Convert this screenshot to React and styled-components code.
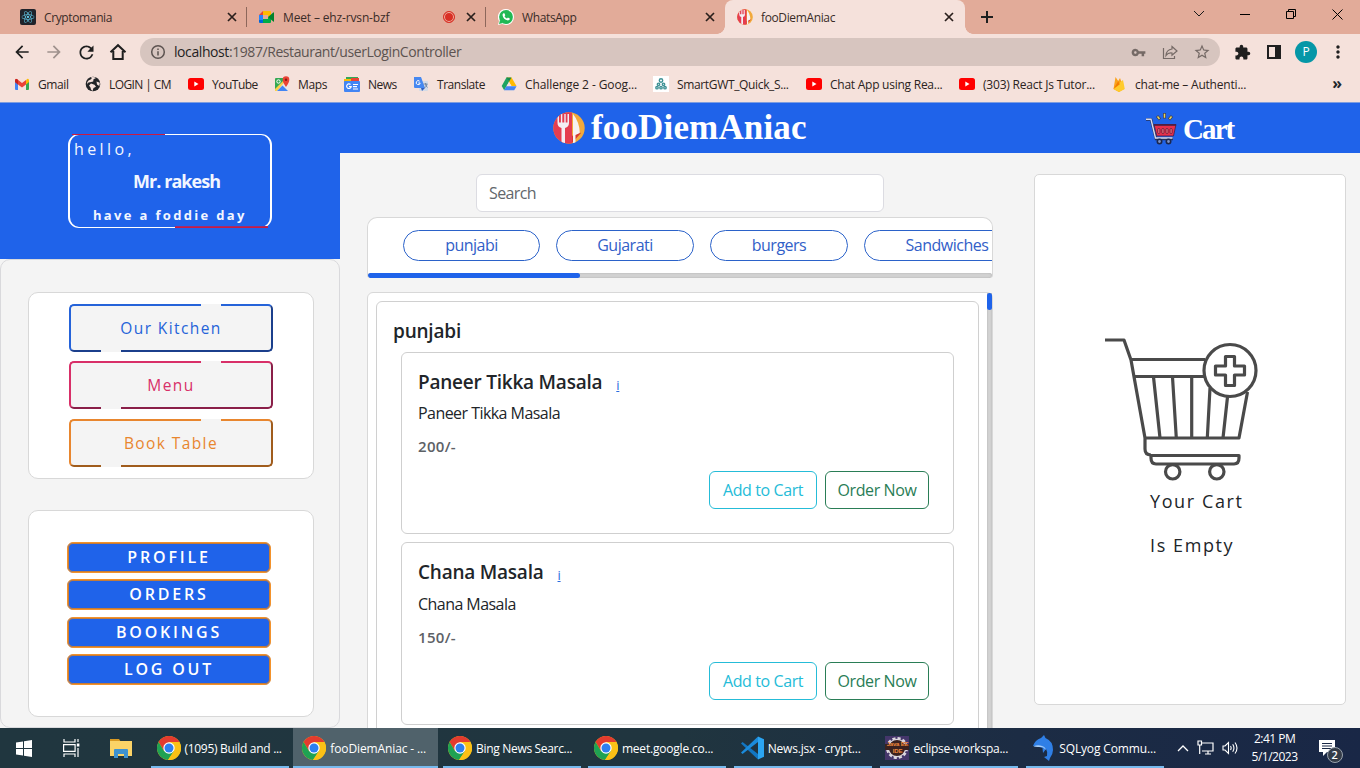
import React from "react";
import styled, { createGlobalStyle, css } from "styled-components";
import { MdArrowBack, MdArrowForward, MdRefresh, MdVpnKey, MdExtension, MdStarBorder, MdMoreVert } from "react-icons/md";
import { FaReact } from "react-icons/fa";

const BLUE = "#1f63ea";

const GlobalStyle = createGlobalStyle`
  * { box-sizing: border-box; }
  body {
    margin: 0;
    overflow: hidden;
    font-family: "Open Sans", "Noto Sans", sans-serif;
    color: #212529;
  }
  svg { display: block; flex: none; }
`;

const Screen = styled.div`
  width: 1360px;
  height: 768px;
  display: flex;
  flex-direction: column;
  overflow: hidden;
  background: #f4f4f4;
`;

/* ---------- browser chrome ---------- */

const TabStrip = styled.div`
  height: 34px;
  flex: none;
  display: flex;
  background: #e2ab99;
  padding-left: 8px;
`;

const Tab = styled.div`
  position: relative;
  width: 239px;
  flex: none;
  display: flex;
  align-items: center;
  padding: 0 10px 0 12px;
  font-size: 12px;
  color: #3a2c28;
  ${(p) =>
    p.$divided &&
    css`
      &::after {
        content: "";
        position: absolute;
        right: 0;
        top: 7px;
        width: 1px;
        height: 20px;
        background: #8d675b;
      }
    `}
  ${(p) =>
    p.$active &&
    css`
      width: 240px;
      padding-right: 11px;
      background: #f5e1db;
      border-radius: 8px 8px 0 0;
      &::before,
      &::after {
        content: "";
        position: absolute;
        bottom: 0;
        width: 8px;
        height: 8px;
      }
      &::before {
        left: -8px;
        background: radial-gradient(circle at 0 0, transparent 7.5px, #f5e1db 8px);
      }
      &::after {
        right: -8px;
        background: radial-gradient(circle at 100% 0, transparent 7.5px, #f5e1db 8px);
      }
    `}
`;

const TabTitle = styled.span`
  flex: 1;
  margin-left: 8px;
  white-space: nowrap;
  letter-spacing: -0.37px;
`;

const MeetingTitle = styled(TabTitle)`
  letter-spacing: -0.15px;
`;

const RecordDot = styled.span`
  width: 12px;
  height: 12px;
  margin-right: 11px;
  border-radius: 50%;
  border: 1px solid #d93025;
  background: #d93025;
  box-shadow: inset 0 0 0 1px #f0b8a8;
`;

const NewTab = styled.div`
  display: flex;
  align-items: center;
  margin-left: 15px;
`;

const WindowControls = styled.div`
  margin-left: auto;
  display: flex;
  height: 28px;
`;

const WindowButton = styled.div`
  width: 46px;
  display: flex;
  align-items: center;
  justify-content: center;
`;

const Toolbar = styled.div`
  height: 36px;
  flex: none;
  display: flex;
  align-items: center;
  background: #f5e1db;
  padding-left: 6px;
  color: #1f1f1f;
`;

const ToolButton = styled.div`
  width: 32px;
  display: flex;
  justify-content: center;
  color: ${(p) => p.$tone || "#1f1f1f"};
`;

const AddressBar = styled.div`
  width: 1080px;
  height: 28px;
  margin: 0 6px;
  display: flex;
  align-items: center;
  padding: 0 2px;
  border-radius: 14px;
  background: #d7c5bf;
`;

const Url = styled.div`
  flex: 1;
  font-size: 14px;
  line-height: 18px;
  letter-spacing: -0.42px;
  color: #5c5350;
  b {
    font-weight: 400;
    color: #1f1f1f;
  }
`;

const Avatar = styled.div`
  width: 22px;
  height: 22px;
  border-radius: 50%;
  background: #0597a7;
  color: #fff;
  font-size: 12px;
  line-height: 22px;
  text-align: center;
`;

const BookmarkBar = styled.div`
  height: 33px;
  flex: none;
  display: flex;
  align-items: center;
  background: #f5e1db;
  border-bottom: 1px solid #7d9de0;
  padding: 0 18px 4px 14px;
`;

const Bookmark = styled.div`
  display: flex;
  align-items: center;
  gap: 8px;
  width: ${(p) => p.$w}px;
  flex: none;
  font-size: 12px;
  letter-spacing: ${(p) => p.$ls}px;
  white-space: nowrap;
  color: #2b2321;
`;

const MoreBookmarks = styled.div`
  margin-left: auto;
  font-size: 16px;
  font-weight: 700;
  line-height: 14px;
  padding-bottom: 3px;
`;

/* ---------- page ---------- */

const Page = styled.div`
  flex: 1;
  min-height: 0;
  display: flex;
  overflow: hidden;
`;

const Sidebar = styled.aside`
  width: 340px;
  flex: none;
  display: flex;
  flex-direction: column;
`;

const Greeting = styled.div`
  height: 156px;
  background: ${BLUE};
  padding: 31px 0 0 68px;
`;

const GreetingBox = styled.div`
  position: relative;
  width: 204px;
  height: 94px;
  border: 0 solid #fff;
  border-width: 1px 2px;
  border-radius: 11px;
  color: #f2f6ff;
  display: flex;
  flex-direction: column;
`;

const TopAccent = styled.span`
  position: absolute;
  top: -1px;
  left: 2px;
  width: 93px;
  height: 1px;
  background: #cc1a40;
`;

const BottomAccent = styled.span`
  position: absolute;
  bottom: -1px;
  right: 2px;
  width: 93px;
  height: 2px;
  background: linear-gradient(#a02c6c 50%, #cc1a40 50%);
`;

const Hello = styled.div`
  margin: 4px 0 0 4px;
  font-size: 16px;
  line-height: 21px;
  letter-spacing: 3.4px;
`;

const GuestName = styled.div`
  margin: 9px 0 0 63px;
  font-size: 18px;
  line-height: 24px;
  font-weight: 700;
  letter-spacing: -0.95px;
`;

const Wish = styled.div`
  margin: 13px 0 0 23px;
  font-size: 13px;
  line-height: 18px;
  font-weight: 700;
  letter-spacing: 2.33px;
  white-space: nowrap;
`;

const SidePanel = styled.div`
  flex: 1;
  display: flex;
  flex-direction: column;
  align-items: flex-start;
  gap: 31px;
  padding: 32px 0 0 27px;
  border: 1px solid #d9d9dc;
  border-radius: 10px;
`;

const SideCard = styled.div`
  width: 286px;
  height: ${(p) => p.$h}px;
  display: flex;
  flex-direction: column;
  padding: ${(p) => p.$pad};
  gap: ${(p) => p.$gap}px;
  background: #fff;
  border: 1px solid #d8d8d8;
  border-radius: 10px;
`;

const NavButton = styled.div`
  position: relative;
  width: 204px;
  height: 48px;
  border: 2px solid;
  border-color: ${(p) => `${p.$tone} ${p.$dark} ${p.$dark} ${p.$tone}`};
  border-radius: 5px;
  background: #f4f4f4;
  color: ${(p) => p.$tone};
  font-size: 15.5px;
  line-height: 45px;
  letter-spacing: 1.4px;
  text-align: center;
  &::before,
  &::after {
    content: "";
    position: absolute;
    width: 20px;
    height: 2px;
    background: #f4f4f4;
  }
  &::before {
    top: -2px;
    left: 130px;
  }
  &::after {
    bottom: -2px;
    left: 30px;
  }
`;

const AccountButton = styled.div`
  width: 204px;
  height: 31px;
  border: 1px solid #f3922b;
  box-shadow: inset 0 0 0 1px #c47b38;
  border-radius: 6px;
  background: ${BLUE};
  color: #fff;
  font-size: 16px;
  font-weight: 600;
  line-height: 29.6px;
  letter-spacing: 2.8px;
  text-align: center;
`;

const Content = styled.div`
  flex: 1;
  display: flex;
  flex-direction: column;
  min-width: 0;
`;

const Header = styled.header`
  height: 50px;
  flex: none;
  display: flex;
  align-items: center;
  background: ${BLUE};
  padding-left: 213px;
  color: #fff;
  font-family: "Liberation Serif", serif;
  font-weight: 700;
`;

const Brand = styled.div`
  display: flex;
  align-items: center;
  gap: 6px;
  width: 592px;
  font-size: 35px;
  line-height: 50px;
  letter-spacing: 0.15px;
`;

const CartLink = styled.div`
  display: flex;
  align-items: center;
  gap: 6px;
  font-size: 29px;
  line-height: 50px;
  letter-spacing: -1.9px;
  padding-top: 2px;
`;

const Columns = styled.div`
  flex: 1;
  min-height: 0;
  display: flex;
  align-items: flex-start;
  padding: 21px 14px 0 27px;
  gap: 41px;
`;

const MenuColumn = styled.main`
  width: 626px;
  flex: none;
  display: flex;
  flex-direction: column;
`;

const SearchBox = styled.div`
  width: 408px;
  height: 38px;
  margin-left: 109px;
  padding-left: 12px;
  border: 1px solid #dcdce2;
  border-radius: 6px;
  background: #fff;
  color: #62676c;
  font-size: 16px;
  line-height: 37px;
  letter-spacing: -0.6px;
`;

const CategoryBox = styled.div`
  height: 61px;
  margin-top: 5px;
  border: 1px solid #d8d8d8;
  border-bottom: 0;
  border-radius: 10px 10px 3px 3px;
  background: #fff;
  overflow: hidden;
  display: flex;
  flex-direction: column;
  justify-content: space-between;
`;

const Pills = styled.div`
  display: flex;
  gap: 16px;
  padding: 12px 0 0 35px;
`;

const Pill = styled.div`
  width: ${(p) => p.$w || 138}px;
  height: 31px;
  flex: none;
  border: 1px solid #2b62c9;
  border-radius: 16px;
  color: #3260c8;
  font-size: 16px;
  line-height: 29px;
  letter-spacing: -0.5px;
  text-align: center;
`;

const ScrollTrack = styled.div`
  height: 5px;
  border-radius: 3px;
  background: #d2d2d2;
  box-shadow: inset 0 0 2px #a8a8a8;
`;

const ScrollThumb = styled.div`
  width: 212px;
  height: 5px;
  border-radius: 3px;
  background: ${BLUE};
`;

const DishList = styled.div`
  height: 460px;
  margin-top: 14px;
  display: flex;
  justify-content: space-between;
  padding-left: 8px;
  border: 1px solid #d8d8d8;
  border-radius: 6px;
  background: #fff;
`;

const DishSection = styled.section`
  width: 603px;
  margin-top: 8px;
  padding: 16px 0 0 24px;
  border: 1px solid #d0d0d0;
  border-radius: 6px;
`;

const SideScroll = styled.div`
  width: 5px;
  background: #d2d2d2;
  box-shadow: inset 0 0 2px #a8a8a8;
  &::before {
    content: "";
    display: block;
    height: 17px;
    border-radius: 3px;
    background: ${BLUE};
  }
`;

const SectionTitle = styled.h5`
  margin: 0 0 8px -8px;
  font-size: 19px;
  font-weight: 600;
  line-height: 26px;
  letter-spacing: -0.2px;
`;

const DishCard = styled.article`
  width: 553px;
  height: ${(p) => p.$h}px;
  margin-bottom: 8px;
  padding: 16px 24px 0 16px;
  border: 1px solid #cfcfcf;
  border-radius: 6px;
`;

const DishName = styled.h5`
  margin: 0;
  display: flex;
  gap: 14px;
  font-size: 19px;
  font-weight: 600;
  line-height: 26px;
  letter-spacing: -0.23px;
  u {
    font-size: 13px;
    font-weight: 400;
    line-height: 32px;
    height: 26px;
    color: #2b6be0;
  }
`;

const DishText = styled.div`
  margin-top: ${(p) => p.$top}px;
  font-size: 16px;
  line-height: 24px;
  letter-spacing: -0.55px;
`;

const Price = styled.div`
  margin-top: 9px;
  font-size: 15px;
  font-weight: 600;
  line-height: 24px;
  letter-spacing: 0.3px;
  color: #5d6166;
`;

const Actions = styled.div`
  display: flex;
  justify-content: flex-end;
  gap: 8px;
  margin-top: 13px;
`;

const ActionButton = styled.div`
  width: ${(p) => p.$w}px;
  height: 38px;
  border: 1px solid ${(p) => p.$tone};
  border-radius: 6px;
  color: ${(p) => p.$tone};
  font-size: 16px;
  line-height: 37px;
  letter-spacing: -0.4px;
  text-align: center;
`;

const CartPanel = styled.div`
  width: 312px;
  height: 531px;
  display: flex;
  flex-direction: column;
  padding: 162px 0 0 70px;
  background: #fff;
  border: 1px solid #d8d8d8;
  border-radius: 5px;
`;

const EmptyText = styled.div`
  margin: ${(p) => p.$top}px 0 0 45px;
  font-size: 18px;
  line-height: 26px;
  letter-spacing: 1.6px;
`;

/* ---------- taskbar ---------- */

const Taskbar = styled.div`
  height: 40px;
  flex: none;
  display: flex;
  background: linear-gradient(90deg, #20363f 0%, #20353f 50%, #1c2c44 75%, #192746 100%);
  color: #fff;
  font-size: 12px;
`;

const TaskIcon = styled.div`
  width: ${(p) => p.$w}px;
  display: flex;
  align-items: center;
  justify-content: center;
`;

const TaskItem = styled.div`
  position: relative;
  width: 145px;
  margin-right: 0.8px;
  display: flex;
  align-items: center;
  gap: 4px;
  padding-left: 9.5px;
  white-space: nowrap;
  letter-spacing: ${(p) => p.$ls}px;
  background: ${(p) => (p.$active ? "#50626b" : "transparent")};
  &::after {
    content: "";
    position: absolute;
    bottom: 0;
    left: ${(p) => (p.$active ? 0 : 4)}px;
    right: ${(p) => (p.$active ? 0 : 3)}px;
    height: 2px;
    background: #76b9ed;
  }
`;

const Tray = styled.div`
  display: flex;
  align-items: center;
  margin-left: 9px;
  gap: 8px;
`;

const Clock = styled.div`
  width: 54px;
  margin-left: 2px;
  text-align: center;
  line-height: 18px;
  letter-spacing: -0.5px;
`;

const Notifications = styled.div`
  position: relative;
  margin-left: 9px;
`;

const Badge = styled.span`
  position: absolute;
  left: 8px;
  top: 7px;
  width: 16px;
  height: 16px;
  border-radius: 50%;
  border: 1px solid #9aa3ad;
  background: #343c48;
  font-size: 11px;
  font-weight: 600;
  line-height: 14px;
  text-align: center;
`;

/* ---------- drawings ---------- */

const Cross = () => (
  <svg width="10" height="10" viewBox="0 0 10 10" stroke="#2a1f1c" strokeWidth="1.7">
    <path d="M1 1l8 8M9 1l-8 8" />
  </svg>
);

const ReactTile = () => (
  <svg width="16" height="16" viewBox="0 0 16 16">
    <rect width="16" height="16" rx="2" fill="#20232a" />
    <g transform="translate(1.5 1.5)" color="#61c9e8">
      <FaReact size={13} />
    </g>
  </svg>
);

const MeetIcon = () => (
  <svg width="16" height="16" viewBox="0 0 16 16">
    <path d="M4 2v4H0z" fill="#ea4335" />
    <path d="M0 6h4v5H0z" fill="#2684fc" />
    <path d="M0 11h4v3H1q-1 0-1-1z" fill="#0066da" />
    <path d="M4 2h7q1 0 1 1v4L9 8V6H4z" fill="#ffba00" />
    <path d="M4 10h5V8l3 1v4q0 1-1 1H4z" fill="#00ac47" />
    <path d="M9 8l5.3-4.6q.7-.4.7.4v8.6q0 .7-.7.2z" fill="#00832d" />
  </svg>
);

const WhatsAppIcon = () => (
  <svg width="16" height="16" viewBox="0 0 16 16">
    <path d="M8 0a8 8 0 0 1 0 16l-4-1-4 1 1-4A8 8 0 0 1 8 0" fill="#fff" />
    <circle cx="8" cy="8" r="6.9" fill="#20b954" />
    <path d="M1 15l1-4 3 3z" fill="#20b954" />
    <path d="M5.4 4.3l1-.1.9 2-.8 1q.9 1.6 2.5 2.4l.9-1 1.9.9q.2 1.700-1.800 2Q5.100 10.500 4.500 6q.1-1.200.9-1.700" fill="#fff" />
  </svg>
);

const CutleryLogo = ({ size }) => (
  <svg width={size} height={size} viewBox="0 0 32 32">
    <defs>
      <clipPath id={`disc${size}`}>
        <circle cx="16" cy="16" r="15.700" />
      </clipPath>
    </defs>
    <g clipPath={`url(#disc${size})`}>
      <rect width="32" height="32" fill="#f2a93b" />
      <path d="M0 0h19v32H0z" fill="#e53d50" />
      <path d="M19 24l6-4 3 1-9 10z" fill="#d9372f" />
      <path d="M4.500 2v9q0 4 4 5v16h3.500V16q4-1 4-5V2h-1.500v8.500h-1.800V2h-1.400v8.500H9.300V2H7.900v8.500H6V2z" fill="#f3eef4" />
      <path d="M20 2q6.500 8 6.800 19L22.500 23v9H20z" fill="#f6f2f2" />
    </g>
  </svg>
);

const GmailIcon = () => (
  <svg width="16" height="16" viewBox="0 0 16 16">
    <path d="M1 5h3v9H2q-1 0-1-1z" fill="#4285f4" />
    <path d="M12 5h3v8q0 1-1 1h-2z" fill="#34a853" />
    <path d="M12 4.500 13 3q2-.8 2 1.500V6l-3 2.500z" fill="#fbbc04" />
    <path d="M1 6V4.500Q1 2 3.200 3.200L8 7l4-3v4.500l-4 3-4-3z" fill="#ea4335" />
    <path d="M1 6V4.500Q1 2.500 3 3l1 1v4.500z" fill="#c5221f" />
  </svg>
);

const GlobeIcon = () => (
  <svg width="16" height="16" viewBox="0 0 16 16">
    <circle cx="8" cy="8" r="7.300" fill="#222427" />
    <path d="M2.200 8.500Q2.500 6 5 6.200L8.200 5.500 8.500 3.200 11 2Q9 .6 6 1.200 7.500 2 6 3.200L3.500 4.500Q1.500 6 2.200 8.500M6 7.500l3.500 1.200 1.500 2-2.500 1.300L7.500 15Q5.500 13.500 5.500 11.500L4 9.500zM11.500 5.500l3.300 1.200-.5 3.300-2.300-1.500z" fill="#f5e1db" />
  </svg>
);

const YouTubeIcon = () => (
  <svg width="16" height="16" viewBox="0 0 16 16">
    <rect y="2" width="16" height="12" rx="2.500" fill="#f00" />
    <path d="M6.300 5.500v5L10.500 8z" fill="#fff" />
  </svg>
);

const MapsIcon = () => (
  <svg width="16" height="16" viewBox="0 0 16 16">
    <rect x="1" y="2" width="13" height="13" rx="1" fill="#34a853" />
    <path d="M1 15 13 3l1 1v11z" fill="#e8e8e8" />
    <path d="M1 13 12 2h2L3 15H1z" fill="#fbd14b" />
    <path d="M3 15l5.500-5.500L14 15z" fill="#4285f4" />
    <circle cx="4.500" cy="5.500" r="1.700" fill="none" stroke="#fff" />
    <path d="M12 11Q8.500 6 8.700 3.500A3.300 3.300 0 0 1 15.300 3.500Q15.500 6 12 11" fill="#ea4335" />
    <circle cx="12" cy="3.700" r="1.200" fill="#8c1a12" />
  </svg>
);

const NewsIcon = () => (
  <svg width="16" height="16" viewBox="0 0 16 16">
    <path d="M2 1h12v4H2z" fill="#34a853" />
    <path d="M0 3h10v4H0z" fill="#fbbc04" />
    <path d="M7 2h8v4H7z" fill="#ea4335" />
    <rect y="5" width="16" height="11" rx="1" fill="#4285f4" />
    <path d="M6.500 8.500a2.300 2.300 0 1 0 .7 2.200H5M9 8.500h5M9 10.700h4M9 13h5" fill="none" stroke="#fff" strokeWidth="1.200" />
  </svg>
);

const TranslateIcon = () => (
  <svg width="16" height="16" viewBox="0 0 16 16">
    <rect x="6" y="5" width="9" height="10" rx="1" fill="#d5dbe6" />
    <path d="M1 1h7l4 11H2q-1 0-1-1z" fill="#4688f1" />
    <path d="M8 12h4l-3 3z" fill="#2f5fc0" />
    <path d="M6.600 5.200a2 2 0 1 0 .6 1.800H5.300" fill="none" stroke="#fff" />
    <path d="M10.500 8h4M12.500 7v1q0 2 2 3.500M14 8q-.5 2.500-2.500 4" fill="none" stroke="#6b7d99" strokeWidth=".8" />
  </svg>
);

const DriveIcon = () => (
  <svg width="16" height="16" viewBox="0 0 16 16">
    <path d="M5.500 1.500h5L15.500 10h-5z" fill="#ffba00" />
    <path d="M.7 10 5.500 1.500h1L8 5.800 3.200 14.300z" fill="#1ea362" />
    <path d="M5.500 1.500h5L8 5.800z" fill="#178a4f" />
    <path d="M8 6l2.300 4H5.700z" fill="#f5e1db" />
    <path d="M5.400 10.200h10.200L13.200 14.300H3z" fill="#4285f4" />
  </svg>
);

const GwtIcon = () => (
  <svg width="16" height="16" viewBox="0 0 16 16">
    <rect width="16" height="16" fill="#fff" />
    <g fill="none" stroke="#3f9296" strokeWidth="1.400">
      <circle cx="8" cy="4.500" r="1.700" />
      <circle cx="5.500" cy="8.300" r="1.200" />
      <circle cx="10.500" cy="8.300" r="1.200" />
      <circle cx="4" cy="11.700" r="1.200" />
      <circle cx="8" cy="11.700" r="1.200" />
      <circle cx="12" cy="11.700" r="1.200" />
    </g>
  </svg>
);

const FirebaseIcon = () => (
  <svg width="16" height="16" viewBox="0 0 16 16">
    <path d="M2.500 13 4.500 1l2.700 4L9 2l4 11-5 3z" fill="#f9a21b" />
    <path d="M2.500 13 11.300 4.300l.8.200L13.800 13 8 16z" fill="#ffcb2c" />
    <path d="M2.500 13 7.200 5.200l1.600 3z" fill="#f57c00" />
  </svg>
);

const InfoIcon = () => (
  <svg width="16" height="16" viewBox="0 0 16 16" fill="none" stroke="#5c5350" strokeWidth="1.500">
    <circle cx="8" cy="8" r="6.300" />
    <path d="M8 7.200V11.500M8 4.500V6" />
  </svg>
);

const HomeIcon = () => (
  <svg width="18" height="18" viewBox="0 0 18 18" fill="none" stroke="#1f1f1f" strokeWidth="2">
    <path d="M1.500 9.300 9 2.200l7.500 7.100M4.300 8v8h9.400V8" />
  </svg>
);

const ShareIcon = () => (
  <svg width="16" height="16" viewBox="0 0 16 16" fill="none" stroke="#756a66" strokeWidth="1.200">
    <path d="M1.500 4v10.500h11V12" />
    <path d="M10 2.500 15 7l-5 4.300V9q-4-.5-6 2.500Q4.300 5.800 10 5z" />
  </svg>
);

const PanelIcon = () => (
  <svg width="14" height="14" viewBox="0 0 14 14">
    <path d="M1 1h12v12H1z" fill="none" stroke="#1f1f1f" strokeWidth="2" />
    <path d="M8 1h5v12H8z" fill="#1f1f1f" />
  </svg>
);

const PartyCart = () => (
  <svg width="32" height="32" viewBox="0 0 32 32">
    <path d="M1 6.500h5L11 26h17" fill="none" stroke="#26335c" strokeWidth="2.600" />
    <path d="M1 6.300h5L10.500 25h17" fill="none" stroke="#d7dcf0" strokeWidth="1.400" />
    <path d="M9 11.500h22L28.500 23H11.800z" fill="#e8304c" stroke="#4a2450" strokeWidth=".9" />
    <path d="M9 12h22" stroke="#4c1f40" strokeWidth="1.600" />
    <g fill="#ee6a78" stroke="#5c1c3a" strokeWidth=".8">
      <rect x="12.700" y="15.500" width="2.200" height="5" rx="1" />
      <rect x="16.800" y="15.500" width="2.200" height="5" rx="1" />
      <rect x="20.900" y="15.500" width="2.200" height="5" rx="1" />
      <rect x="25" y="15.500" width="2.200" height="5" rx="1" />
    </g>
    <g stroke="#40445a" strokeWidth="3">
      <path d="M19.500 0v5.500M12 3l3 3.500M27 3l-3 3.500" />
    </g>
    <g stroke="#ead75a" strokeWidth="1.400">
      <path d="M19.500 .7v4M12.500 3.500l2 2.500M26.500 3.500l-2 2.500" />
    </g>
    <g fill="#7d92c6" stroke="#1b2750" strokeWidth="1.600">
      <circle cx="14.500" cy="28.500" r="2.200" />
      <circle cx="23.500" cy="28.500" r="2.200" />
    </g>
  </svg>
);

const EmptyCart = () => (
  <svg width="156" height="146" viewBox="0 0 156 146" fill="none" stroke="#4a4a4a" strokeWidth="3.200" strokeLinejoin="round">
    <path d="M0 3h19l7 20 14 78v11q0 6 6 6M26 22.500h74M28 39.500h73M40 101h94l8.500-46" />
    <path d="M48.500 40l6.500 61M67.500 40l3.800 61M86.700 40v61M105 51l-2.700 50M122.500 60l-4.500 41" />
    <path d="M46 118.500h88v2.500q0 6-5 6H51q-5 0-5-6z" />
    <circle cx="67.700" cy="134.800" r="7.200" />
    <circle cx="111.800" cy="134.800" r="7.200" />
    <circle cx="125" cy="33.500" r="26" />
    <path d="M120.500 19.500h9v9.500h10v9h-10v10.500h-9V38h-10v-9h10z" />
  </svg>
);

const ChromeIcon = () => (
  <svg width="24" height="24" viewBox="0 0 24 24">
    <circle cx="12" cy="12" r="12" fill="#fbc116" />
    <path d="M1.600 6A12 12 0 0 1 22.400 6H12L7 15z" fill="#e33b2e" />
    <path d="M1.600 6A12 12 0 0 0 11 24l6-9H7z" fill="#1fa253" />
    <path d="M22.400 6H12l5 9-6 9A12 12 0 0 0 22.400 6" fill="#fbc116" />
    <circle cx="12" cy="12" r="5.700" fill="#fff" />
    <circle cx="12" cy="12" r="4.500" fill="#2d7ff0" />
  </svg>
);

const CodeIcon = () => (
  <svg width="24" height="24" viewBox="0 0 24 24">
    <path d="M1 7.500 2.500 6 18 18v5.500z" fill="#1276c2" />
    <path d="M1 16.500 2.500 18 18 6V.5z" fill="#1b8bdb" />
    <path d="M18 .5l6 2.700v17.600l-6 2.700z" fill="#2ba5f2" />
  </svg>
);

const FolderIcon = () => (
  <svg width="22" height="20" viewBox="0 0 22 20">
    <path d="M0 1h9l2 3H0z" fill="#d99a23" />
    <path d="M0 3h22v15H0z" fill="#fbd367" />
    <path d="M4 20v-8q0-1 1-1h12q1 0 1 1v8h-4v-4H8v4z" fill="#3f92cf" />
  </svg>
);

const WindowsIcon = () => (
  <svg width="16" height="17" viewBox="0 0 16 17" fill="#fff">
    <path d="M0 2.500 7 1.500v6.500H0zM8 1.300 16 0v8H8zM0 9h7v6.500l-7-1zM8 9h8v8l-8-1.300z" />
  </svg>
);

const TaskViewIcon = () => (
  <svg width="17" height="18" viewBox="0 0 17 18" fill="none" stroke="#fff" strokeWidth="1.200">
    <path d="M1 0v3h11V0M1 18v-3h11v3M.6 5.600h11.500v6.800H.6zM15 0v3M15 9v9" />
    <path d="M13.800 4.500h2.600v3h-2.600z" fill="#fff" stroke="none" />
  </svg>
);

const GearTile = styled.div`
  position: relative;
  width: 24px;
  height: 24px;
  flex: none;
  display: flex;
  align-items: center;
  justify-content: center;
  background: #44366b;
  svg { position: absolute; inset: 0; }
  span {
    position: relative;
    font: 700 6px/7px "Liberation Sans", sans-serif;
    letter-spacing: -0.2px;
    color: #f08a3c;
    text-align: center;
    white-space: pre;
  }
`;

const EclipseIcon = () => (
  <GearTile>
    <svg width="24" height="24" viewBox="0 0 24 24">
      <circle cx="12" cy="12" r="9.500" fill="none" stroke="#dcd8df" strokeWidth="3" strokeDasharray="3 2" />
      <circle cx="12" cy="12" r="8.700" fill="#3a211f" stroke="#dcd8df" strokeWidth="1.200" />
      <path d="M0 8h24v6H0z" fill="#3a211f" />
    </svg>
    <span>{"Java EE\nIDE"}</span>
  </GearTile>
);

const DolphinIcon = () => (
  <svg width="24" height="26" viewBox="-1 0 24 26">
    <path d="M1 11Q3 5 9 3l3-3 1.500 3Q21 6 21 15q0 4-3 8l-1 3-5-4 3-1q1-4-1-7l-3 4-.500-5Q5 11 1 11" fill="#2f7fe6" />
    <path d="M1.500 11.500q4-2 8.500-.5 4 1.500 3.500 4Q12 12 9 12t-7.500-.5" fill="#a9cdf5" />
  </svg>
);

const TABS = [
  { icon: <ReactTile />, title: "Cryptomania", divided: true },
  { icon: <MeetIcon />, title: "Meet – ehz-rvsn-bzf", divided: true, recording: true },
  { icon: <WhatsAppIcon />, title: "WhatsApp" },
  { icon: <CutleryLogo size={16} />, title: "fooDiemAniac", active: true },
];

const BOOKMARKS = [
  [<GmailIcon />, "Gmail", 71, -0.4],
  [<GlobeIcon />, "LOGIN | CM", 103, -0.6],
  [<YouTubeIcon />, "YouTube", 86, -0.5],
  [<MapsIcon />, "Maps", 70, -0.35],
  [<NewsIcon />, "News", 69, -0.5],
  [<TranslateIcon />, "Translate", 88, -0.45],
  [<DriveIcon />, "Challenge 2 - Goog...", 152, -0.1],
  [<GwtIcon />, "SmartGWT_Quick_S...", 153, -0.35],
  [<YouTubeIcon />, "Chat App using Rea...", 153, -0.25],
  [<YouTubeIcon />, "(303) React Js Tutor...", 152, -0.2],
  [<FirebaseIcon />, "chat-me – Authenti...", 140, -0.2],
];

const DISHES = [
  { name: "Paneer Tikka Masala", price: "200/-", h: 182, top: 6 },
  { name: "Chana Masala", price: "150/-", h: 183, top: 7 },
];

const TASKS = [
  [<ChromeIcon />, "(1095) Build and ...", -0.3],
  [<ChromeIcon />, "fooDiemAniac - ...", -0.12],
  [<ChromeIcon />, "Bing News Searc...", -0.32],
  [<ChromeIcon />, "meet.google.co...", -0.2],
  [<CodeIcon />, "News.jsx - crypt...", -0.2],
  [<EclipseIcon />, "eclipse-workspa...", -0.25],
  [<DolphinIcon />, "SQLyog Commu...", -0.15],
];

export default function App() {
  return (
    <Screen>
      <GlobalStyle />
      <TabStrip>
        {TABS.map((t) => (
          <Tab key={t.title} $active={t.active} $divided={t.divided}>
            {t.icon}
            {t.recording ? <MeetingTitle>{t.title}</MeetingTitle> : <TabTitle>{t.title}</TabTitle>}
            {t.recording && <RecordDot />}
            <Cross />
          </Tab>
        ))}
        <NewTab>
          <svg width="14" height="14" viewBox="0 0 14 14" stroke="#1f1f1f" strokeWidth="2">
            <path d="M7 1v12M1 7h12" />
          </svg>
        </NewTab>
        <WindowControls>
          <WindowButton>
            <svg width="12" height="8" viewBox="0 0 12 8" fill="none" stroke="#1a1a1a"><path d="M1 1l5 5 5-5" /></svg>
          </WindowButton>
          <WindowButton>
            <svg width="10" height="10" viewBox="0 0 10 10" stroke="#000"><path d="M0 5.500h10" /></svg>
          </WindowButton>
          <WindowButton>
            <svg width="10" height="10" viewBox="0 0 10 10" fill="none" stroke="#000"><path d="M.5 2.500h7v7h-7zM2.500 2.500v-2h7v7h-2" /></svg>
          </WindowButton>
          <WindowButton>
            <svg width="11" height="11" viewBox="0 0 11 11" stroke="#000"><path d="M.5.5l10 10M10.500.5l-10 10" /></svg>
          </WindowButton>
        </WindowControls>
      </TabStrip>

      <Toolbar>
        <ToolButton><MdArrowBack size={20} /></ToolButton>
        <ToolButton $tone="#9f918d"><MdArrowForward size={20} /></ToolButton>
        <ToolButton><MdRefresh size={21} /></ToolButton>
        <ToolButton><HomeIcon /></ToolButton>
        <AddressBar>
          <ToolButton><InfoIcon /></ToolButton>
          <Url><b>localhost</b>:1987/Restaurant/userLoginController</Url>
          <ToolButton $tone="#756a66"><MdVpnKey size={15} /></ToolButton>
          <ToolButton><ShareIcon /></ToolButton>
          <ToolButton $tone="#756a66"><MdStarBorder size={18} /></ToolButton>
        </AddressBar>
        <ToolButton><MdExtension size={17} /></ToolButton>
        <ToolButton><PanelIcon /></ToolButton>
        <ToolButton><Avatar>P</Avatar></ToolButton>
        <ToolButton><MdMoreVert size={20} /></ToolButton>
      </Toolbar>

      <BookmarkBar>
        {BOOKMARKS.map(([icon, label, w, ls]) => (
          <Bookmark key={label} $w={w} $ls={ls}>{icon}{label}</Bookmark>
        ))}
        <MoreBookmarks>»</MoreBookmarks>
      </BookmarkBar>

      <Page>
        <Sidebar>
          <Greeting>
            <GreetingBox>
              <Hello>hello,</Hello>
              <GuestName>Mr. rakesh</GuestName>
              <Wish>have a foddie day</Wish>
              <TopAccent />
              <BottomAccent />
            </GreetingBox>
          </Greeting>
          <SidePanel>
            <SideCard $h={187} $pad="11px 0 0 40px" $gap={9.4}>
              <NavButton $tone="#2563d9" $dark="#1b3f8c">Our Kitchen</NavButton>
              <NavButton $tone="#d82f68" $dark="#8a1f48">Menu</NavButton>
              <NavButton $tone="#e8862e" $dark="#a05c1c">Book Table</NavButton>
            </SideCard>
            <SideCard $h={207} $pad="30.6px 0 0 38px" $gap={6.5}>
              <AccountButton>PROFILE</AccountButton>
              <AccountButton>ORDERS</AccountButton>
              <AccountButton>BOOKINGS</AccountButton>
              <AccountButton>LOG OUT</AccountButton>
            </SideCard>
          </SidePanel>
        </Sidebar>

        <Content>
          <Header>
            <Brand><CutleryLogo size={32} />fooDiemAniac</Brand>
            <CartLink><PartyCart />Cart</CartLink>
          </Header>
          <Columns>
            <MenuColumn>
              <SearchBox>Search</SearchBox>
              <CategoryBox>
                <Pills>
                  <Pill $w={137}>punjabi</Pill>
                  <Pill>Gujarati</Pill>
                  <Pill>burgers</Pill>
                  <Pill $w={166}>Sandwiches</Pill>
                </Pills>
                <ScrollTrack><ScrollThumb /></ScrollTrack>
              </CategoryBox>
              <DishList>
                <DishSection>
                  <SectionTitle>punjabi</SectionTitle>
                  {DISHES.map((d) => (
                    <DishCard key={d.name} $h={d.h}>
                      <DishName>{d.name}<u>i</u></DishName>
                      <DishText $top={d.top}>{d.name}</DishText>
                      <Price>{d.price}</Price>
                      <Actions>
                        <ActionButton $w={108} $tone="#25bcd8">Add to Cart</ActionButton>
                        <ActionButton $w={104} $tone="#2a7d56">Order Now</ActionButton>
                      </Actions>
                    </DishCard>
                  ))}
                </DishSection>
                <SideScroll />
              </DishList>
            </MenuColumn>
            <CartPanel>
              <EmptyCart />
              <EmptyText $top={5}>Your Cart</EmptyText>
              <EmptyText $top={18}>Is Empty</EmptyText>
            </CartPanel>
          </Columns>
        </Content>
      </Page>

      <Taskbar>
        <TaskIcon $w={48}><WindowsIcon /></TaskIcon>
        <TaskIcon $w={47}><TaskViewIcon /></TaskIcon>
        <TaskIcon $w={52}><FolderIcon /></TaskIcon>
        {TASKS.map(([icon, label, ls], i) => (
          <TaskItem key={label} $active={i === 1} $ls={ls}>{icon}{label}</TaskItem>
        ))}
        <Tray>
          <svg width="12" height="8" viewBox="0 0 12 8" fill="none" stroke="#fff" strokeWidth="1.300"><path d="M1 7l5-5 5 5" /></svg>
          <svg width="17" height="16" viewBox="0 0 17 16" fill="none" stroke="#fff" strokeWidth="1.200">
            <path d="M5 3h11v8H5M8 14h6M11 11v3M1 1h3.500v4H1zM2.700 5v9" />
          </svg>
          <svg width="16" height="14" viewBox="0 0 16 14" fill="none" stroke="#fff" strokeWidth="1.100">
            <path d="M1 5h2l3.500-3.500v11L3 9H1zM8.500 5q1.300 2 0 4M10.700 3.300q2.500 3.700 0 7.400M13 1.500q4 5.500 0 11" />
          </svg>
          <Clock>2:41 PM<br />5/1/2023</Clock>
          <Notifications>
            <svg width="16" height="16" viewBox="0 0 16 16">
              <path d="M0 0h16v12H8l-4 4v-4H0z" fill="#fff" />
              <path d="M3 3.500h10M3 6h10M3 8.500h10" stroke="#1a2946" strokeWidth="1.200" />
            </svg>
            <Badge>2</Badge>
          </Notifications>
        </Tray>
      </Taskbar>
    </Screen>
  );
}
